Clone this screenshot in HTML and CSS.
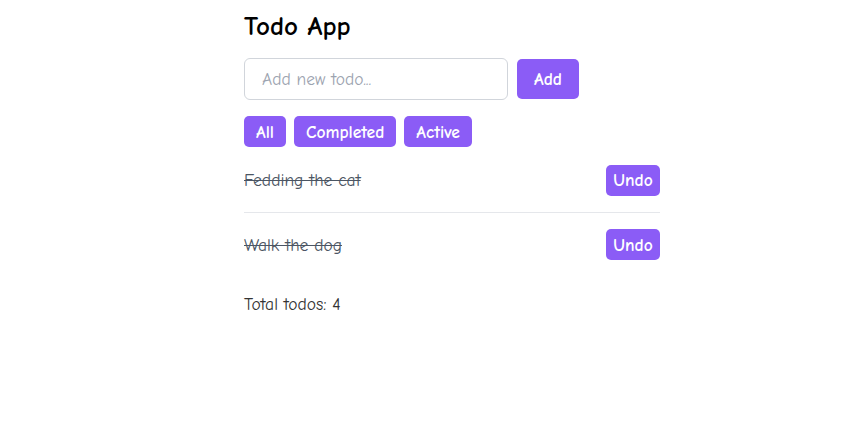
FILE: index.html
```html
<!DOCTYPE html>
<html>
<head>
<meta charset="utf-8">
<link rel="stylesheet" href="styles.css">
</head>
<body>
<main class="app">
  <h1 class="title">Todo App</h1>
  <form class="add-row">
    <input class="add-input" type="text" placeholder="Add new todo...">
    <button class="btn btn-add" type="button">Add</button>
  </form>
  <div class="filters">
    <button class="btn btn-filter" type="button">All</button>
    <button class="btn btn-filter" type="button">Completed</button>
    <button class="btn btn-filter" type="button">Active</button>
  </div>
  <ul class="todos">
    <li class="todo">
      <span class="todo-text done">Fedding the cat</span>
      <button class="btn btn-undo" type="button">Undo</button>
    </li>
    <li class="todo">
      <span class="todo-text done">Walk the dog</span>
      <button class="btn btn-undo" type="button">Undo</button>
    </li>
  </ul>
  <p class="total">Total todos: 4</p>
</main>
</body>
</html>
```
FILE: styles.css
```css
* { box-sizing: border-box; }
body {
  margin: 0;
  background: #fff;
  font-family: "Comic Sans MS", "Comic Neue", "Open Sans", sans-serif;
  color: #111;
}
.app {
  width: 416px;
  margin-left: 244px;
  padding-top: 9px;
  display: flex;
  flex-direction: column;
}
.title {
  margin: 0;
  font-size: 27px;
  font-weight: 700;
  line-height: 36px;
  color: #000;
}
.add-row {
  display: flex;
  gap: 9px;
  margin-top: 13px;
  align-items: center;
}
.add-input {
  width: 264px;
  height: 42px;
  border: 1px solid #d1d5db;
  border-radius: 6px;
  padding: 0 17px;
  font-family: inherit;
  font-size: 17.5px;
  color: #333;
  outline: none;
}
.add-input::placeholder { color: #9ca3af; }
.btn {
  border: none;
  background: #8b5cf6;
  color: #fff;
  font-family: inherit;
  font-weight: 700;
  font-size: 17.5px;
  border-radius: 5px;
  cursor: pointer;
  padding: 0;
}
.btn-add {
  width: 62px;
  height: 40px;
}
.filters {
  display: flex;
  gap: 8px;
  margin-top: 16px;
}
.btn-filter {
  height: 31px;
  padding: 0 12px;
}
.todos {
  list-style: none;
  margin: 17px 0 0;
  padding: 0;
}
.todo {
  display: flex;
  align-items: center;
  justify-content: space-between;
  min-height: 32px;
}
.todo + .todo {
  margin-top: 16px;
  padding-top: 16px;
  border-top: 1px solid #e5e7eb;
}
.todo-text {
  font-size: 17.5px;
  color: #4b5563;
}
.todo-text.done { text-decoration: line-through; }
.btn-undo {
  width: 54px;
  height: 31px;
}
.total {
  margin: 33px 0 0;
  font-size: 17.5px;
  line-height: 22px;
  color: #333;
}
```
